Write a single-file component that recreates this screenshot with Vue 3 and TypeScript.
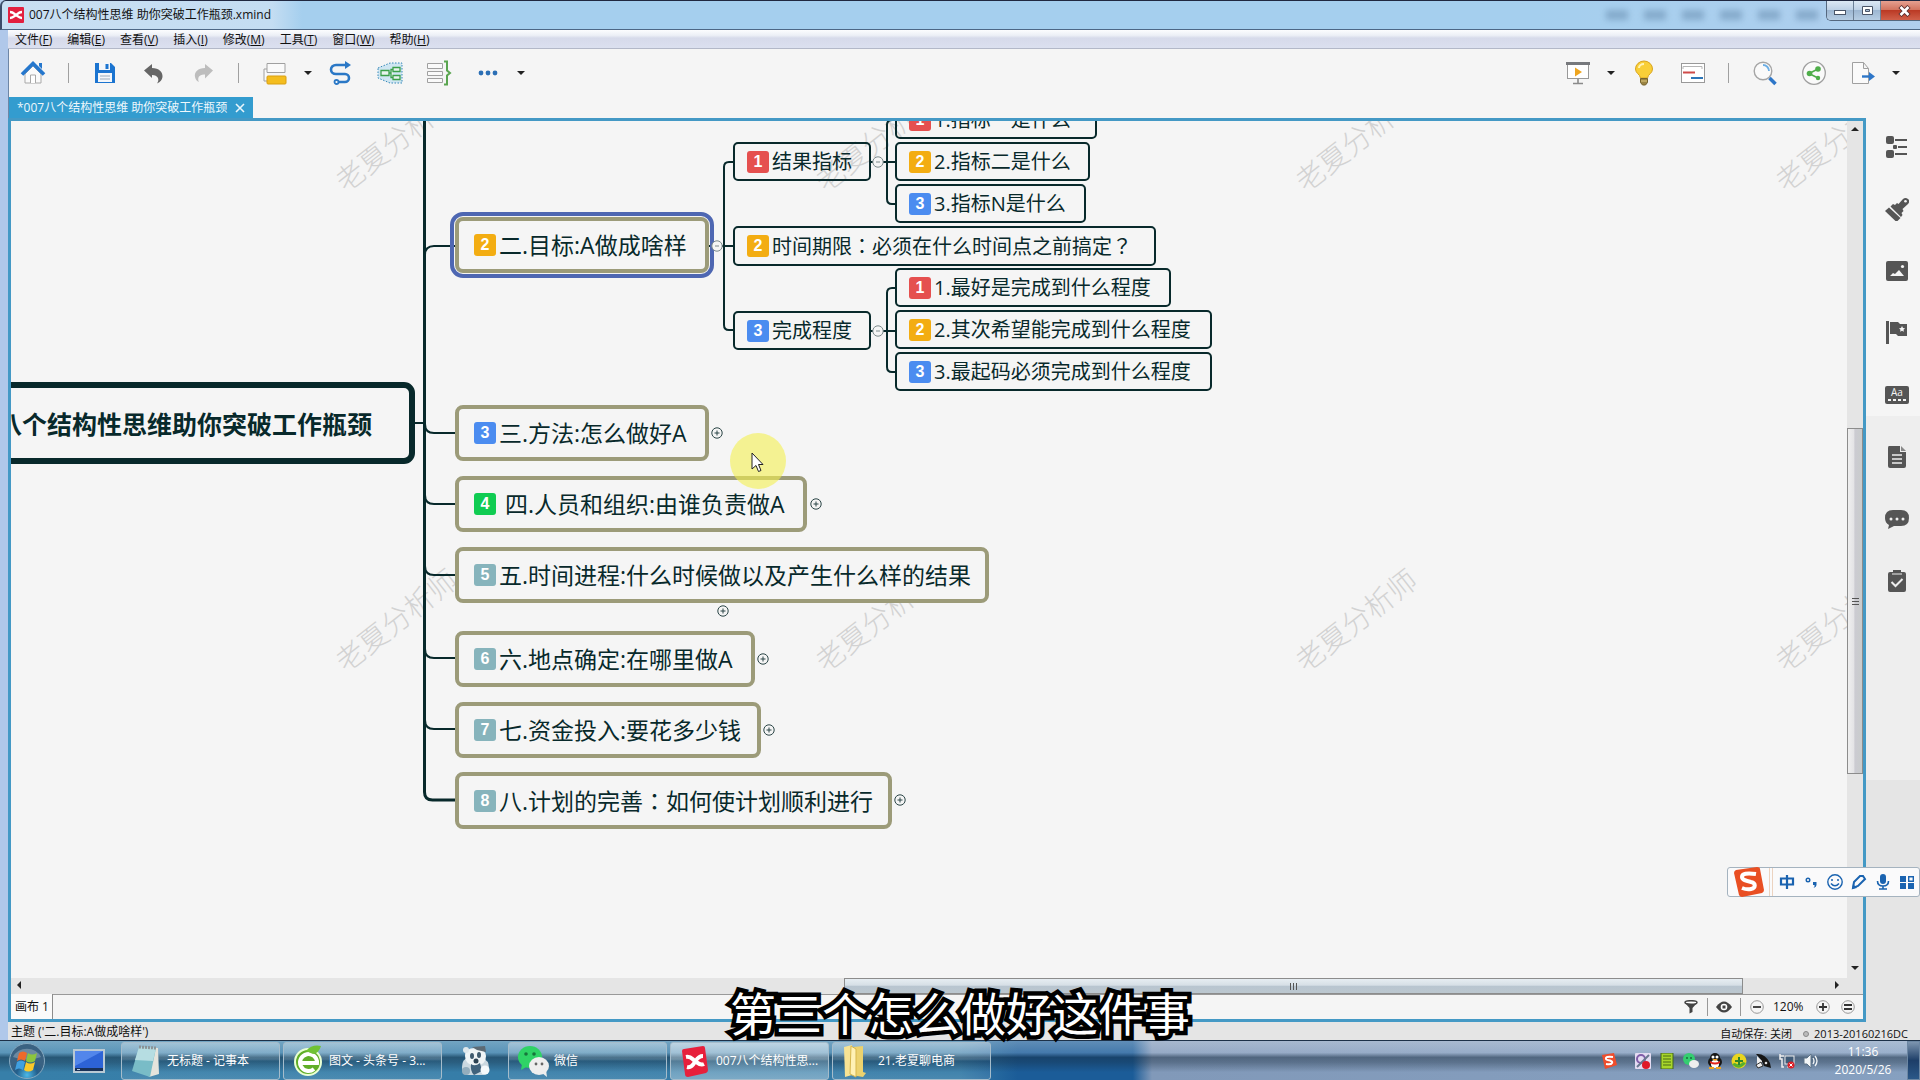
<script setup lang="ts">
interface Topic {
  badge: number
  text: string
  x: number
  y: number
  w: number
  selected?: boolean
}
interface Toggle {
  x: number
  y: number
  open?: boolean
}

const menus = [
  ['文件', 'F'], ['编辑', 'E'], ['查看', 'V'], ['插入', 'I'],
  ['修改', 'M'], ['工具', 'T'], ['窗口', 'W'], ['帮助', 'H'],
]

const mainTopics: Topic[] = [
  { badge: 2, text: '二.目标:A做成啥样', x: 444, y: 96, w: 254, selected: true },
  { badge: 3, text: '三.方法:怎么做好A', x: 444, y: 284, w: 254 },
  { badge: 4, text: ' 四.人员和组织:由谁负责做A', x: 444, y: 355, w: 352 },
  { badge: 5, text: '五.时间进程:什么时候做以及产生什么样的结果', x: 444, y: 426, w: 534 },
  { badge: 6, text: '六.地点确定:在哪里做A', x: 444, y: 510, w: 300 },
  { badge: 7, text: '七.资金投入:要花多少钱', x: 444, y: 581, w: 306 },
  { badge: 8, text: '八.计划的完善：如何使计划顺利进行', x: 444, y: 651, w: 437 },
]

const subTopics: Topic[] = [
  { badge: 1, text: '结果指标', x: 722, y: 21, w: 138 },
  { badge: 2, text: '时间期限：必须在什么时间点之前搞定？', x: 722, y: 105, w: 423 },
  { badge: 3, text: '完成程度', x: 722, y: 190, w: 138 },
  { badge: 1, text: '1.指标一是什么', x: 884, y: -21, w: 202 },
  { badge: 2, text: '2.指标二是什么', x: 884, y: 21, w: 195 },
  { badge: 3, text: '3.指标N是什么', x: 884, y: 63, w: 191 },
  { badge: 1, text: '1.最好是完成到什么程度', x: 884, y: 147, w: 276 },
  { badge: 2, text: '2.其次希望能完成到什么程度', x: 884, y: 189, w: 317 },
  { badge: 3, text: '3.最起码必须完成到什么程度', x: 884, y: 231, w: 317 },
]

const toggles: Toggle[] = [
  { x: 706, y: 125, open: true },
  { x: 867, y: 41, open: true },
  { x: 867, y: 210, open: true },
  { x: 706, y: 312 },
  { x: 805, y: 383 },
  { x: 712, y: 490 },
  { x: 752, y: 538 },
  { x: 758, y: 609 },
  { x: 889, y: 679 },
]

const watermarks = [0, 1].flatMap((row) =>
  [0, 1, 2, 3].map((col) => ({ x: 385 + col * 480, y: 19 + row * 480 })),
)

// Full-width punctuation is set apart so that it can sit centred in its cell.
const pieces = (text: string) => text.split(/([：？])/).filter((s) => s !== '')
const isMark = (s: string) => s === '：' || s === '？'

const place = (p: { x: number; y: number }) => ({ left: `${p.x}px`, top: `${p.y}px` })
const box = (t: Topic) => ({ ...place(t), width: `${t.w}px` })
</script>

<template>
  <div class="desktop">
    <header class="titlebar">
      <svg class="app-icon" viewBox="0 0 16 16"><rect width="16" height="16" rx="1" fill="#e2203f" /><path d="M2 5c3 0 4 1.500 6 3s3 3 6 3M2 11c3 0 4-1.500 6-3s3-3 6-3" fill="none" stroke="#fff" stroke-width="2.400" /></svg>
      <span class="title-text">007八个结构性思维 助你突破工作瓶颈.xmind</span>
      <div class="ghosts" aria-hidden="true"><i></i><i></i><i></i><i></i><i></i><i></i></div>
      <div class="win-buttons">
        <button aria-label="最小化"><svg width="14" height="10" viewBox="0 0 14 10"><rect x="1.500" y="4.500" width="11" height="4" fill="#fff" stroke="#4a5568" /></svg></button>
        <button aria-label="还原"><svg width="13" height="11" viewBox="0 0 13 11"><path d="M1.500 1.500h10v8h-10z" fill="#fff" stroke="#4a5568" /><path d="M4.500 4.500h4v2h-4z" fill="#a9bfd6" stroke="#4a5568" /></svg></button>
        <button class="close" aria-label="关闭"><svg width="13" height="12" viewBox="0 0 13 12"><path d="M2 1.500l9 9M11 1.500l-9 9" stroke="#5b3030" stroke-width="4.500" /><path d="M2.500 2l8 8M10.500 2l-8 8" stroke="#fff" stroke-width="2.600" /></svg></button>
      </div>
    </header>

    <div class="window">
      <nav class="menubar">
        <button v-for="m in menus" :key="m[1]">{{ m[0] }}(<u>{{ m[1] }}</u>)</button>
      </nav>

      <div class="toolbar">
        <div class="tools">
          <button class="tool" aria-label="主页"><svg width="26" height="26" viewBox="0 0 26 26"><path d="M5 14v9h16v-9l-8-8z" fill="#fafafa" stroke="#a9a9a9" /><path d="M10.500 23v-8h5v8" fill="#fff" stroke="#a9a9a9" /><path d="M2 14.500L13 3.500l11 11" fill="none" stroke="#2577cd" stroke-width="3.600" /><path d="M19 3h3v6l-3-3z" fill="#2577cd" /></svg></button>
          <i class="sep"></i>
          <button class="tool" aria-label="保存"><svg width="22" height="24" viewBox="0 0 22 24"><path d="M1 2h16l4 4v16H1z" fill="#1b74d0" /><path d="M5 2h11v7H5z" fill="#f3f6fa" /><path d="M11.500 3h3v5h-3z" fill="#1b74d0" /><path d="M4 12h14v9H4z" fill="#f3f6fa" /><path d="M6 15h10M6 18h10" stroke="#9ab" /></svg></button>
          <button class="tool" aria-label="撤销"><svg width="22" height="24" viewBox="0 0 22 24"><path d="M1 9.500L9 3v4c7 0 11 4 10.500 9-.500 3-2 5-5.500 6.500 3-4 1-8.500-5-8.500v3z" fill="#666" /></svg></button>
          <button class="tool" aria-label="重做"><svg width="22" height="24" viewBox="0 0 22 24"><path d="M21 9.500L13 3v4C6 7 2 11 3 16c.500 2.500 2 4.500 4 5-2-4 0-8 6-7.500v4z" fill="#bdbdbd" /></svg></button>
          <i class="sep"></i>
          <button class="tool" aria-label="主题"><svg width="26" height="26" viewBox="0 0 26 26"><path d="M5 9H2v12h3M5 3.500h18v9H5z" fill="#fafafa" stroke="#a0a0a0" /><rect x="5" y="16" width="19" height="8" rx="1" fill="#f4bd1e" stroke="#d99f10" /></svg></button>
          <button class="caret" aria-label="更多主题"><i></i></button>
          <button class="tool" aria-label="联系"><svg width="24" height="26" viewBox="0 0 24 26"><path d="M18 5H7a5 4.500 0 000 9h9a4 4 0 010 8H9" fill="none" stroke="#2b78c6" stroke-width="2.600" /><path d="M16 1l6 4-6 4z" fill="#2b78c6" /><circle cx="7.500" cy="22" r="2" fill="#fff" stroke="#2b78c6" stroke-width="1.800" /></svg></button>
          <button class="tool" aria-label="外框"><svg width="26" height="26" viewBox="0 0 26 26"><path d="M1 8l12-5h12v20H13L1 18z" fill="#cfe6f2" stroke="#3688b8" stroke-dasharray="1.500 1.500" /><path d="M4 10.500h8v5H4zM16 7.500h7v4h-7zM16 15.500h7v4h-7zM12 13h2m2-3.500h-2v8h2" fill="#e8f4ee" stroke="#3ba04a" stroke-width="1.300" /></svg></button>
          <button class="tool" aria-label="概要"><svg width="26" height="26" viewBox="0 0 26 26"><path d="M1.500 3.500h15v5h-15zM1.500 11.500h15v4h-15zM1.500 18.500h15v4h-15z" fill="#fafafa" stroke="#a0a0a0" /><path d="M18 1.500h3v9l3 2.500-3 2.500v9h-3" fill="none" stroke="#5aa550" stroke-width="2" /></svg></button>
          <button class="tool" aria-label="更多"><svg width="20" height="6" viewBox="0 0 20 6"><g fill="#2b6fb5"><circle cx="3" cy="3" r="2.400" /><circle cx="10" cy="3" r="2.400" /><circle cx="17" cy="3" r="2.400" /></g></svg></button>
          <button class="caret" aria-label="更多选项"><i></i></button>
        </div>
        <div class="tools">
          <button class="tool" aria-label="演示"><svg width="26" height="26" viewBox="0 0 26 26"><path d="M13 19v4M8 23.500h10" stroke="#8a8a8a" stroke-width="1.600" /><rect x="2.500" y="4" width="21" height="14.500" fill="#fff" stroke="#999" /><rect x="1" y="2" width="24" height="3" fill="#77797d" /><path d="M10 7.500l7 4.500-7 4.500z" fill="#efa51f" /></svg></button>
          <button class="caret" aria-label="演示选项"><i></i></button>
          <button class="tool" aria-label="头脑风暴"><svg width="20" height="26" viewBox="0 0 20 26"><path d="M6.500 18C6 14 1.500 13.500 1.500 9a8.500 8 0 0117 0c0 4.500-4.500 5-5 9z" fill="#f9cf38" stroke="#d9a41f" /><path d="M5 8c0-2 2-4 5-4" fill="none" stroke="#fff3b5" stroke-width="2" /><path d="M6.500 18.500h7v4l-2 2.500h-3l-2-2.500z" fill="#9b8443" stroke="#75632d" /><path d="M7 21h6" stroke="#e2cb80" /></svg></button>
          <button class="tool" aria-label="甘特图"><svg width="26" height="22" viewBox="0 0 26 22"><rect x="1.500" y="1.500" width="23" height="19" fill="#fff" stroke="#999" /><path d="M3 7V4.500h19V7" fill="none" stroke="#b5b5b5" /><path d="M3 10.500h12" stroke="#cf4b49" stroke-width="2" /><path d="M11 16h12" stroke="#2d76b8" stroke-width="2" /></svg></button>
          <i class="sep"></i>
          <button class="tool" aria-label="搜索"><svg width="26" height="26" viewBox="0 0 26 26"><circle cx="11" cy="11" r="8.800" fill="#fafafa" stroke="#a5a5a5" stroke-width="1.400" /><path d="M11 5a6 6 0 016 6" fill="none" stroke="#6baee5" stroke-width="1.800" /><path d="M17.500 18l6 6" stroke="#2d76c8" stroke-width="3.600" /></svg></button>
          <button class="tool" aria-label="分享"><svg width="26" height="26" viewBox="0 0 26 26"><circle cx="13" cy="13" r="11.300" fill="#fafafa" stroke="#a0a0a0" stroke-width="1.300" /><path d="M17 9l-9 4.500 9 4.500" fill="none" stroke="#4fae4a" stroke-width="1.700" /><g fill="#4fae4a"><circle cx="17" cy="9" r="2.800" /><circle cx="8.500" cy="13.500" r="2.800" /><circle cx="17" cy="18" r="2.200" /></g></svg></button>
          <button class="tool" aria-label="导出"><svg width="26" height="26" viewBox="0 0 26 26"><path d="M2.500 2.500h11l5 6v15h-16zM13.500 2.500v6h5" fill="#fafafa" stroke="#a0a0a0" /><path d="M12 16.500h9" stroke="#2d76c8" stroke-width="2.400" /><path d="M19 12l6 4.500-6 4.500z" fill="#2d76c8" /></svg></button>
          <button class="caret" aria-label="导出选项"><i></i></button>
        </div>
      </div>

      <div class="work">
        <section class="editor">
          <div class="tabs">
            <div class="tab">
              <span>*007八个结构性思维 助你突破工作瓶颈</span>
              <button aria-label="关闭标签"><svg width="10" height="10" viewBox="0 0 10 10"><path d="M1 1l8 8M9 1l-8 8" stroke="#e8f5fb" stroke-width="1.600" /></svg></button>
            </div>
          </div>
          <div class="frame">
            <div class="view">
              <main class="canvas">
                <span v-for="(w, i) in watermarks" :key="'w' + i" class="watermark" :style="place(w)" aria-hidden="true">老夏分析师</span>

                <svg class="links" aria-hidden="true">
                  <g fill="none" stroke="#08292b" stroke-width="2">
                    <path d="M404 302h10" />
                    <path d="M413.500 0V671q0 8 8 8h23" stroke-width="3" />
                    <path d="M414 134q0-9 9-9h22M414 303q0 9 9 9h22M414 374q0 9 9 9h22M414 445q0 9 9 9h22M414 528q0 9 9 9h22M414 599q0 9 9 9h22" />
                    <path d="M698 125h25M723 41h-5q-5 0-5 5V204q0 5 5 5h5" />
                    <path d="M860 41h25M885-1h-4q-5 0-5 5V78q0 5 5 5h4" />
                    <path d="M860 210h25M885 167h-4q-5 0-5 5V246q0 5 5 5h4" />
                  </g>
                </svg>

                <div class="root-topic">八个结构性思维助你突破工作瓶颈</div>

                <div v-for="t in mainTopics" :key="t.text" class="topic main" :class="{ selected: t.selected }" :style="box(t)">
                  <b class="badge" :class="'p' + t.badge">{{ t.badge }}</b><span><span v-for="(s, i) in pieces(t.text)" :key="i" :class="{ mark: isMark(s) }">{{ s }}</span></span>
                </div>
                <div v-for="t in subTopics" :key="t.text" class="topic sub" :style="box(t)">
                  <b class="badge" :class="'p' + t.badge">{{ t.badge }}</b><span><span v-for="(s, i) in pieces(t.text)" :key="i" :class="{ mark: isMark(s) }">{{ s }}</span></span>
                </div>

                <button v-for="(g, i) in toggles" :key="'g' + i" class="toggle" :class="{ open: g.open }" :style="place(g)" :aria-label="g.open ? '收起' : '展开'">
                  <svg viewBox="0 0 12 12"><circle cx="6" cy="6" r="5.200" /><path :d="g.open ? 'M4 6h4' : 'M3.500 6h5M6 3.500v5'" /></svg>
                </button>

                <div class="pointer">
                  <svg width="14" height="21" viewBox="0 0 14 21"><path d="M1 1v16l4-3.500 2.500 6 2.500-1-2.500-6H12z" fill="#fff" stroke="#222" /></svg>
                </div>
              </main>
              <div class="vscroll">
                <div class="v-before"><i class="up"></i></div>
                <div class="v-thumb"><i></i><i></i><i></i></div>
                <div class="v-after"><i class="down"></i></div>
              </div>
            </div>
            <div class="hscroll">
              <div class="h-before"><i class="left"></i></div>
              <div class="h-thumb"><i></i><i></i><i></i></div>
              <div class="h-after"><i class="right"></i></div>
            </div>
            <div class="sheets">
              <button class="sheet">画布 1</button>
              <div class="sheet-tools">
                <button class="wide" aria-label="筛选"><svg width="14" height="14" viewBox="0 0 14 14"><ellipse cx="7" cy="2.500" rx="6" ry="1.800" fill="#fff" stroke="#444" stroke-width="1.500" /><path d="M1 3l4.500 5v5.500l3-1.500V8L13 3q-6 3-12 0z" fill="#444" /></svg></button>
                <i class="rule"></i>
                <button class="wide" aria-label="显示"><svg width="18" height="12" viewBox="0 0 18 12"><path d="M1 6q8-11 16 0-8 11-16 0z" fill="#444" /><circle cx="9" cy="6" r="3.300" fill="#fff" /><rect x="7.500" y="4.500" width="3" height="3" fill="#444" /></svg></button>
                <i class="rule"></i>
                <button class="wide" aria-label="缩小"><svg width="14" height="14" viewBox="0 0 14 14"><circle cx="7" cy="7" r="6.300" fill="none" stroke="#999" /><path d="M3 7h8" stroke="#333" stroke-width="1.800" /></svg></button>
                <span class="zoom">120%</span>
                <button class="narrow" aria-label="放大"><svg width="14" height="14" viewBox="0 0 14 14"><circle cx="7" cy="7" r="6.300" fill="none" stroke="#999" /><path d="M3 7h8M7 3v8" stroke="#333" stroke-width="1.800" /></svg></button>
                <button class="narrow" aria-label="实际大小"><svg width="14" height="14" viewBox="0 0 14 14"><circle cx="7" cy="7" r="6.300" fill="none" stroke="#999" /><path d="M3 5h8M3 9h8" stroke="#333" stroke-width="1.800" /></svg></button>
              </div>
            </div>
          </div>
        </section>

        <aside class="sidebar">
          <div class="group first">
            <button aria-label="大纲"><svg viewBox="0 0 24 24"><path d="M10 5h12M13 12h9M10 19h12" stroke="#555" stroke-width="2" /><g fill="#555"><rect x="1" y="1" width="8" height="8" rx="2" /><rect x="8" y="10" width="4" height="4" rx="1" /><rect x="1" y="15" width="8" height="8" rx="2" /></g></svg></button>
            <button aria-label="格式"><svg viewBox="0 0 24 24"><g fill="#555"><path d="M0 14l4-3.500L15.500 21 11.500 25z" /><path d="M5.500 9.500L8 7l2 1 2-2 1.500 1L18 2q2.500-2 5 0t0 5l-5.500 5 1 2-2 2 1 2-1.500 2z" /></g><circle cx="20.500" cy="4.300" r="1.300" fill="#f5f5f5" /></svg></button>
            <button aria-label="图片"><svg viewBox="0 0 24 24"><rect x="1" y="2" width="22" height="20" rx="2" fill="#555" /><path d="M5 17l3-3 2 1 4-4 5 6z" fill="#f5f5f5" /><circle cx="17.500" cy="7.500" r="1.600" fill="#f5f5f5" /></svg></button>
            <button aria-label="图标"><svg viewBox="0 0 24 24"><path d="M1 0h3v23H1zM5 1h8l2 2h7v12H13l-2-2H5z" fill="#555" /><path d="M17 5l1 2 2 .300-1.500 1.500.400 2-1.900-1-1.900 1 .400-2L14 7.300l2-.300z" fill="#f5f5f5" /></svg></button>
            <button aria-label="标签"><svg viewBox="0 0 24 24"><rect x="0" y="3" width="24" height="18" rx="2" fill="#555" /><text x="12" y="13" font-size="10" text-anchor="middle" fill="#f5f5f5">Aa</text><path d="M3 17h18" stroke="#f5f5f5" stroke-width="2" stroke-dasharray="3 2" /></svg></button>
          </div>
          <div class="group second">
            <button aria-label="备注"><svg viewBox="0 0 24 24"><path d="M4 1h11v6h6v14q0 2-2 2H5q-2 0-2-2V3q0-2 1-2z" fill="#555" /><path d="M16 1l5 5h-5z" fill="#888" /><path d="M7 10h10M7 14h10M7 18h10" stroke="#eee" stroke-width="1.300" /></svg></button>
            <button aria-label="批注"><svg viewBox="0 0 24 24"><path d="M8 3h8q8 0 8 8t-8 8H9l-6 3 1-4q-4-2-4-7 0-8 8-8z" fill="#555" /><g fill="#eee"><circle cx="6" cy="12" r="1.500" /><circle cx="12" cy="12" r="1.500" /><circle cx="18" cy="12" r="1.500" /></g></svg></button>
            <button aria-label="任务"><svg viewBox="0 0 24 24"><path d="M5 3h3V1h8v2h3q2 0 2 2v16q0 2-2 2H5q-2 0-2-2V5q0-2 2-2z" fill="#555" /><path d="M7 5h10" stroke="#eee" /><path d="M6.500 13l4 4 7-7" fill="none" stroke="#eee" stroke-width="2" /></svg></button>
          </div>
        </aside>
      </div>

      <footer class="status">
        <span>主题 ('二.目标:A做成啥样')</span>
        <span class="status-right">自动保存: 关闭<i></i>2013-20160216DC</span>
      </footer>
    </div>

    <div class="taskbar">
      <button class="orb" aria-label="开始"><svg width="38" height="38" viewBox="0 0 38 38"><defs><radialGradient id="orb" cy="0.900"><stop offset="0" stop-color="#4cb9e8" /><stop offset=".6" stop-color="#235f8c" /><stop offset="1" stop-color="#3a6282" /></radialGradient></defs><circle cx="19" cy="19" r="17.500" fill="url(#orb)" stroke="#86a9c0" /><path d="M5 15a15 13 0 0128 0q-14 5-28 0z" fill="#fff" opacity=".25" /><path d="M11 11q4-3 8 0l-2 8q-4-3-8 0z" fill="#ee6a2b" /><path d="M20 11q4 3 9 0l-2 8q-5 3-9 0z" fill="#8cc53e" /><path d="M9 20q4-3 8 0l-2 8q-4-3-8 0z" fill="#40a0e0" /><path d="M18 20q4 3 9 0l-2 8q-5 3-9 0z" fill="#fbc929" /></svg></button>
      <button class="quick" aria-label="显示桌面"><svg width="32" height="24" viewBox="0 0 32 24"><rect x="1" y="1" width="30" height="22" fill="#2d63d6" stroke="#b9c9d4" stroke-width="2" /><path d="M2 2h28L2 17z" fill="#78a9ff" opacity=".5" /><path d="M2 19h28v3H2z" fill="#193157" /><path d="M4 20.500h3" stroke="#bcd" /></svg></button>
      <button class="task">
        <svg width="32" height="34" viewBox="0 0 32 34"><path d="M10 3l18 1 1 26-10 3z" fill="#e5e4dc" /><path d="M9 3l17 1-6 29L2 27z" fill="#79bcc7" /><path d="M9 3l17 1-3 13L5 16z" fill="#b6dde2" /><path d="M9 3l17 1" stroke="#8b9296" stroke-width="3" stroke-dasharray="2 1" /></svg><span>无标题 - 记事本</span></button>
      <button class="task">
        <svg width="32" height="34" viewBox="0 0 32 34"><circle cx="16" cy="18" r="13" fill="#61ae28" stroke="#e9ffd4" stroke-width="2" /><path d="M8 19h17a8.500 8.500 0 10-3 6" fill="none" stroke="#fff" stroke-width="4" /><path d="M14 7Q20 0 29 2q-2 7-8 8z" fill="#70c234" /></svg><span>图文 - 头条号 - 3...</span></button>
      <button class="paw" aria-label="百度"><svg width="32" height="32" viewBox="0 0 32 32"><path d="M3 22q0-8 6-9h14q7 2 7 10 0 7-6 7H8q-5 0-5-8z" fill="#cbd8e0" /><path d="M6 11q0-8 10-8t11 8q0 9-10 10Q6 20 6 11z" fill="#eff4f6" /><path d="M13 2l13-1 1 6-9-2z" fill="#5c6a74" /><circle cx="7" cy="5" r="3" fill="#dfe8ec" /><ellipse cx="13" cy="11" rx="2" ry="3" fill="#3f5a6e" /><ellipse cx="20" cy="10" rx="2" ry="3" fill="#3f5a6e" /><path d="M12 19q4 3 9-1l2 8-8 4q-4-4-3-11z" fill="#40627c" /><circle cx="17" cy="16" r="2.500" fill="#2b4152" /><circle cx="7" cy="26" r="4" fill="#93adbd" /><circle cx="26" cy="25" r="4.500" fill="#f6fafc" /></svg></button>
      <button class="task">
        <svg width="32" height="34" viewBox="0 0 32 34"><ellipse cx="13" cy="13" rx="12" ry="11" fill="#2fd366" /><path d="M5 20l-1 6 7-4z" fill="#2fd366" /><circle cx="9" cy="10" r="1.800" fill="#17753b" /><circle cx="17" cy="10" r="1.800" fill="#17753b" /><ellipse cx="22" cy="22" rx="10" ry="9" fill="#eee" /><path d="M25 29l5 4-1-7z" fill="#eee" /><circle cx="19" cy="20" r="1.400" fill="#666" /><circle cx="25" cy="20" r="1.400" fill="#666" /></svg><span>微信</span></button>
      <button class="task active">
        <svg width="32" height="34" viewBox="0 0 32 34"><path d="M3 7Q3 5 5 5l19-3q2 0 2 2l3 22q0 2-2 3L9 33q-3 0-3-3z" fill="#e7203c" /><path d="M7 13c5-1 6 2 9 4s5 5 9 3M8 23c4 1 6-2 8-5s3-6 8-6" fill="none" stroke="#fff" stroke-width="4" /></svg><span>007八个结构性思...</span></button>
      <button class="task">
        <svg width="32" height="34" viewBox="0 0 32 34"><path d="M3 3l8-2v30l-7 2z" fill="#f7e394" /><path d="M12 3l10-1v26l3 1-3 4-12-2z" fill="#ecd26e" /><path d="M10 2l5 3v28l-6-3z" fill="#fff1b5" stroke="#d5b64d" /></svg><span>21.老夏聊电商</span></button>

      <div class="tray">
        <svg class="sogou" viewBox="0 0 16 16"><path d="M1 2l12-2 3 12-12 4z" fill="#ef4d2c" /><path d="M12 4q-8-1-7 2 0 1 4 1.500 3 1 2 2.500-1 2-6 1" fill="none" stroke="#fff" stroke-width="2" /></svg>
        <svg viewBox="0 0 16 16"><rect width="16" height="16" rx="1" fill="#e4dcf2" /><circle cx="6" cy="6" r="4" fill="none" stroke="#805da8" stroke-width="2" /><path d="M2 14L14 2" stroke="#68778f" stroke-width="2" /><circle cx="11" cy="12" r="4" fill="#df1928" /></svg>
        <svg viewBox="0 0 16 16"><rect x="2" width="12" height="16" fill="#a8d62b" stroke="#41641c" /><path d="M4 3h8M4 6h8M4 9h8M4 12h8" stroke="#486b17" /></svg>
        <svg viewBox="0 0 16 16"><circle cx="6" cy="6" r="6" fill="#34cd70" /><circle cx="4" cy="5" r="1" fill="#176d3c" /><circle cx="8" cy="5" r="1" fill="#176d3c" /><ellipse cx="11" cy="11" rx="5" ry="4" fill="#eee" /></svg>
        <svg viewBox="0 0 16 16"><ellipse cx="8" cy="9" rx="7" ry="6" fill="#171717" /><circle cx="8" cy="5" r="5" fill="#171717" /><ellipse cx="8" cy="11" rx="4" ry="4" fill="#fff" /><circle cx="6" cy="4" r="1.500" fill="#fff" /><circle cx="10" cy="4" r="1.500" fill="#fff" /><path d="M3 8q5 3 10 0v2q-5 3-10 0z" fill="#e3231b" /><path d="M5 6h6l-3 2zM2 14h5v2H2zM9 14h5v2H9z" fill="#f3a31c" /></svg>
        <svg viewBox="0 0 16 16"><circle cx="8" cy="8" r="7.500" fill="#e8d51e" /><path d="M1 11q7 8 14-1l-3-1q-4 4-8 1z" fill="#57af2e" /><path d="M8 4v8M4 8h8" stroke="#2e852a" stroke-width="2" /></svg>
        <svg viewBox="0 0 16 16"><path d="M1 1q9-1 14 9l1 5-7-2q-2-6-8-12z" fill="#151515" /><path d="M2 3l5 5-1 5-4-1z" fill="#eee" /><circle cx="11" cy="10" r="1.300" fill="#ddd" /><path d="M1 12l5-3 2 4-5 2z" fill="#eee" stroke="#333" /></svg>
        <svg viewBox="0 0 16 16"><path d="M1 1v5h2v8h2M1 3h4" fill="none" stroke="#eee" stroke-width="1.500" /><rect x="6" y="3" width="9" height="8" fill="#405b77" stroke="#eee" /><path d="M8 14h6" stroke="#eee" /><circle cx="12" cy="12" r="3.500" fill="#dc1f27" /><path d="M10.500 10.500l3 3M13.500 10.500l-3 3" stroke="#fff" /></svg>
        <svg viewBox="0 0 16 16"><path d="M1 5h3l4-4v14l-4-4H1z" fill="#f3f6f8" stroke="#5e7488" /><path d="M10 5q2 3 0 6M12 3q4 5 0 10" fill="none" stroke="#f3f6f8" stroke-width="1.300" /></svg>
      </div>
      <div class="clock"><span>11:36</span><span>2020/5/26</span></div>
      <button class="peek" aria-label="显示桌面"></button>
    </div>

    <div class="ime">
      <svg class="ime-logo" width="32" height="30" viewBox="0 0 32 30"><path d="M1 6q0-2 2-3l21-3q3 0 3 2l4 21q0 2-2 3L9 30q-2 0-3-2z" fill="#e94f23" /><path d="M23 7Q9 5 9 10c0 3 5 4 9 5 5 1 5 6 0 7q-4 1-9-1" fill="none" stroke="#fff" stroke-width="4" /></svg>
      <i class="ime-rule"></i>
      <button aria-label="中文"><svg viewBox="0 0 16 16"><path d="M2 4.500h12v6H2zM8 1v14" fill="none" stroke="#1a63b0" stroke-width="2.200" /></svg></button>
      <button aria-label="标点"><svg viewBox="0 0 16 16"><circle cx="5" cy="6" r="1.800" fill="none" stroke="#1a63b0" stroke-width="1.400" /><path d="M10 8h3.500v3q0 2-3 3 1.500-1.500 1-3H10z" fill="#1a63b0" /></svg></button>
      <button aria-label="表情"><svg viewBox="0 0 16 16"><circle cx="8" cy="8" r="7.200" fill="none" stroke="#1a63b0" stroke-width="1.400" /><path d="M5 5v2M11 5v2M4 9.500q4 4.500 8 0" fill="none" stroke="#1a63b0" stroke-width="1.500" /></svg></button>
      <button aria-label="手写"><svg viewBox="0 0 16 16"><path d="M2 14l1-6 6-6h3l2 3-7 7z" fill="none" stroke="#1a63b0" stroke-width="2" /><path d="M1 15l1-5 4 4z" fill="#1a63b0" /></svg></button>
      <button aria-label="语音"><svg viewBox="0 0 16 16"><rect x="5" y="0" width="6" height="10" rx="3" fill="#1a63b0" /><path d="M2.500 7q0 5 5.500 5t5.500-5M8 12v3M4 15h8" fill="none" stroke="#1a63b0" stroke-width="1.600" /></svg></button>
      <button aria-label="工具箱"><svg viewBox="0 0 16 16"><path d="M1 2h6v6H1zM1 9h6v6H1zM9 9h6v6H9z" fill="#1a63b0" /><path d="M9.700 2.700h4.600v4.600H9.700z" fill="none" stroke="#1a63b0" stroke-width="1.400" /></svg></button>
    </div>

    <p class="subtitle">第三个怎么做好这件事</p>
  </div>
</template>

<style>
body {
  margin: 0;
}
</style>

<style scoped>
* {
  box-sizing: border-box;
}
.desktop {
  position: relative;
  display: flex;
  flex-direction: column;
  min-height: 100vh;
  overflow: hidden;
  font-family: "Open Sans", "Noto Sans CJK SC", sans-serif;
  font-size: 12px;
  line-height: 16px;
  color: #111;
  background: #b4cdec;
}
button {
  display: flex;
  align-items: center;
  justify-content: center;
  padding: 0;
  border: 0;
  background: none;
  color: inherit;
  font: inherit;
  white-space: nowrap;
}
svg {
  display: block;
  flex: none;
}

.titlebar {
  display: flex;
  align-items: center;
  height: 30px;
  padding-left: 8px;
  border-top: 1px solid #202840;
  border-bottom: 1px solid #4d6785;
  border-left: 2px solid #3c4c68;
  border-radius: 6px 0 0 0;
  background: linear-gradient(90deg, #c9dff2 0, #c4ddf2 270px, #a5cfee 300px, #a5cfee 80%, #b0cfee 100%);
}
.app-icon {
  width: 16px;
  height: 16px;
  margin: 0 5px 0 -2px;
}
.ghosts {
  display: flex;
  gap: 16px;
  margin: 0 8px 0 auto;
}
.ghosts i {
  width: 22px;
  height: 10px;
  background: #6d93b5;
  opacity: 0.6;
  filter: blur(3px);
}
.win-buttons {
  display: flex;
  align-self: flex-start;
  border: 1px solid #55687f;
  border-top: 0;
  border-right: 0;
  border-radius: 0 0 0 5px;
  overflow: hidden;
}
.win-buttons button {
  width: 27px;
  height: 19px;
  border-right: 1px solid #6c8096;
  background: linear-gradient(#dce8f4 0, #bfd2e6 45%, #9db7d2 50%, #b6cde3 100%);
}
.win-buttons .close {
  width: 39px;
  padding-left: 8px;
  border: 0;
  background: linear-gradient(#e5a090 0, #d37560 45%, #bb3a25 50%, #d0604a 100%);
}

.window {
  flex: 1;
  display: flex;
  flex-direction: column;
  border-left: 8px solid #b0c8ea;
  background: #f5f5f5;
  box-shadow: inset 1px 0 0 #6e86a6;
}
.menubar {
  display: flex;
  gap: 15px;
  height: 19px;
  padding: 2px 0 0 7px;
  border-bottom: 1px solid #b3b8c8;
  background: linear-gradient(#fcfdfe 0, #eceff6 30%, #d6daea 45%, #dbe0ef 100%);
}
.toolbar {
  display: flex;
  justify-content: space-between;
  height: 48px;
  padding-right: 16px;
}
.tools {
  display: flex;
  align-items: center;
}
.tool {
  width: 49px;
  height: 40px;
}
.sep {
  display: flex;
  justify-content: center;
  width: 23px;
}
.sep::before {
  content: "";
  width: 1px;
  height: 20px;
  background: #a0a0a0;
}
.caret {
  width: 17px;
  height: 40px;
}
.caret i {
  border: 4px solid transparent;
  border-top-color: #222;
  border-bottom: 0;
}

.work {
  flex: 1;
  display: flex;
}
.editor {
  flex: 1;
  display: flex;
  flex-direction: column;
  min-width: 0;
}
.tabs {
  display: flex;
  height: 21px;
  padding-left: 1px;
}
.tab {
  display: flex;
  align-items: center;
  gap: 8px;
  padding: 0 8px;
  background: #339ccf;
  color: #eef8fd;
  white-space: nowrap;
}
.frame {
  flex: 1;
  display: flex;
  flex-direction: column;
  border: 3px solid #4499c5;
}
.view {
  flex: 1;
  display: flex;
}
.canvas {
  position: relative;
  flex: 1;
  overflow: hidden;
  color: #08292b;
}
.links {
  position: absolute;
  inset: 0;
  width: 100%;
  height: 100%;
}
.watermark {
  position: absolute;
  font-size: 29px;
  font-weight: 300;
  line-height: 32px;
  color: #d2d2d2;
  white-space: nowrap;
  transform: translate(-50%, -50%) rotate(-38deg);
}
.root-topic {
  position: absolute;
  left: -44px;
  top: 261px;
  width: 448px;
  padding: 18px 37px 16px 0;
  border: 6px solid #08292b;
  border-radius: 11px;
  font-size: 25px;
  font-weight: 700;
  line-height: 36px;
  text-align: right;
  white-space: nowrap;
}
.topic {
  position: absolute;
  display: flex;
  align-items: center;
  gap: 3px;
  white-space: pre;
}
.mark {
  font-family: "Noto Sans CJK TC", sans-serif;
}
.main {
  padding: 10px 15px;
  border: 4px solid #9c9b79;
  border-radius: 8px;
  background: #f5f5f5;
  font-size: 23px;
  line-height: 28px;
}
.selected {
  outline: 4px solid #4e67b2;
  outline-offset: 1px;
}
.sub {
  padding: 4px 12px;
  border: 2px solid #08292b;
  border-radius: 5px;
  font-size: 20px;
  line-height: 27px;
}
.badge {
  width: 22px;
  height: 22px;
  flex: none;
  border-radius: 3px;
  font-family: "Liberation Sans", sans-serif;
  font-size: 16px;
  line-height: 22px;
  text-align: center;
  color: #fff;
  background: #87b4bc;
}
.p1 {
  background: #e5504f;
}
.p2 {
  background: #f3ad12;
}
.p3 {
  background: #4b8cf0;
}
.p4 {
  background: #10cc52;
}
.toggle {
  position: absolute;
  width: 12px;
  height: 12px;
  transform: translate(-50%, -50%);
}
.toggle svg {
  width: 12px;
  height: 12px;
  overflow: visible;
  fill: #f5f5f5;
  stroke: #2b4546;
}
.toggle.open svg {
  stroke: #7c8a8b;
}
.pointer {
  position: absolute;
  left: 719px;
  top: 312px;
  width: 56px;
  height: 56px;
  padding: 19px 0 0 21px;
  border-radius: 50%;
  background: rgba(244, 240, 80, 0.6);
}

.vscroll {
  display: flex;
  flex-direction: column;
  width: 16px;
  background: #e5e5e5;
}
.v-before {
  flex: 308 1 0;
}
.v-thumb {
  flex: 345 1 0;
  display: flex;
  flex-direction: column;
  align-items: center;
  justify-content: center;
  gap: 2px;
  border: 1px solid #8c8c8c;
  background: linear-gradient(90deg, #efefef 0, #e4e4e6 40%, #cbcbd1 50%, #c9cccc 100%);
}
.v-thumb i {
  width: 7px;
  height: 1px;
  background: #555;
}
.v-after {
  flex: 204 1 0;
  display: flex;
  align-items: flex-end;
}
.up,
.down,
.left,
.right {
  display: block;
  width: 0;
  height: 0;
  border: 4px solid transparent;
}
.up {
  margin: 6px 4px;
  border-top: 0;
  border-bottom-color: #222;
}
.down {
  margin: 8px 4px;
  border-bottom: 0;
  border-top-color: #222;
}
.left {
  margin: 3px 6px;
  border-left: 0;
  border-right-color: #222;
}
.right {
  margin: 3px 24px;
  border-right: 0;
  border-left-color: #222;
}
.hscroll {
  display: flex;
  height: 16px;
  background: #e5e5e5;
}
.h-before {
  flex: 834 1 0;
}
.h-thumb {
  flex: 898 1 0;
  display: flex;
  align-items: center;
  justify-content: center;
  gap: 2px;
  border: 1px solid #8c8c8c;
  background: linear-gradient(#e6edf2 0, #d6dfe6 45%, #b8c5d0 50%, #bcc7cf 100%);
}
.h-thumb i {
  width: 1px;
  height: 7px;
  background: #555;
}
.h-after {
  flex: 120 1 0;
  display: flex;
  justify-content: flex-end;
}
.sheets {
  display: flex;
  height: 25px;
}
.sheet {
  padding: 0 3px 0 4px;
  border-right: 1px solid #8c8c8c;
  background: #fafafa;
}
.sheet-tools {
  flex: 1;
  display: flex;
  align-items: center;
  justify-content: flex-end;
  padding-right: 3px;
  border-top: 1px solid #999;
}
.narrow {
  width: 25px;
  height: 24px;
}
.wide {
  width: 32px;
  height: 24px;
}
.rule {
  width: 1px;
  height: 18px;
  background: #999;
}
.zoom {
  width: 37px;
}

.sidebar {
  display: flex;
  flex-direction: column;
  width: 54px;
  background: #e5e5e5;
}
.group {
  display: flex;
  flex-direction: column;
  align-items: center;
  gap: 38px;
  padding-left: 8px;
}
.first {
  padding-top: 38px;
  padding-bottom: 9px;
  background: #f5f5f5;
}
.second {
  padding-top: 29px;
  padding-bottom: 187px;
  background: #eee;
}
.group svg {
  width: 24px;
  height: 24px;
}

.status {
  display: flex;
  justify-content: space-between;
  height: 18px;
  padding: 2px 12px 0 3px;
  background: #e5e5e5;
}
.status-right {
  display: flex;
  align-items: center;
  padding-top: 3px;
  font-size: 11px;
}
.status-right i {
  width: 6px;
  height: 6px;
  margin: 0 5px 0 11px;
  border: 1px solid #888;
  border-radius: 50%;
  background: #bbb;
}

.taskbar {
  position: relative;
  display: flex;
  align-items: center;
  gap: 3px;
  height: 40px;
  padding-left: 8px;
  border-top: 1px solid #1d3148;
  color: #fff;
  background:
    linear-gradient(rgba(255, 255, 255, 0.3) 0, rgba(235, 240, 250, 0.2) 30%, rgba(20, 38, 55, 0.45) 42%, rgba(20, 38, 55, 0.35) 55%, rgba(20, 38, 55, 0) 80%),
    linear-gradient(90deg, #377fa9 0, #357ba7 50%, #1b5c98 53%, #1b5c98 59%, #8199b9 60%, #86a0c0 100%);
}
.orb {
  width: 38px;
}
.quick {
  width: 69px;
  padding-left: 10px;
}
.task {
  justify-content: flex-start;
  gap: 5px;
  width: 159px;
  height: 38px;
  padding-left: 8px;
  border: 1px solid #a5bccb;
  border-radius: 3px;
  background: linear-gradient(rgba(255, 255, 255, 0.35) 0, rgba(255, 255, 255, 0.15) 45%, rgba(255, 255, 255, 0) 50%, rgba(255, 255, 255, 0.1) 100%);
}
.task.active {
  background: linear-gradient(rgba(255, 255, 255, 0.55) 0, rgba(255, 255, 255, 0.35) 45%, rgba(255, 255, 255, 0.2) 50%, rgba(255, 255, 255, 0.35) 100%);
}
.paw {
  width: 60px;
}
.tray {
  display: flex;
  align-items: center;
  gap: 8px;
  margin-left: auto;
}
.tray svg {
  width: 16px;
  height: 16px;
}
.tray .sogou {
  margin-right: 10px;
}
.clock {
  display: flex;
  flex-direction: column;
  align-items: center;
  gap: 2px;
  width: 82px;
}
.peek {
  width: 13px;
  height: 39px;
  border: 1px solid #6c87a3;
  background: linear-gradient(#7d95af, #1d3e68 50%, #2b5888);
}

.ime {
  position: absolute;
  right: 0;
  bottom: 183px;
  display: flex;
  align-items: center;
  height: 30px;
  padding-left: 5px;
  border: 1px solid #a5b3bf;
  border-radius: 3px;
  background: #fafafb;
}
.ime button {
  width: 24px;
  height: 28px;
}
.ime button svg {
  width: 16px;
  height: 16px;
}
.ime-rule {
  width: 4px;
  height: 28px;
  margin: 0 2px 0 4px;
  border: 1px solid #ecd3c0;
  border-width: 0 1px;
}

.subtitle {
  position: absolute;
  left: 0;
  right: 0;
  bottom: 38px;
  margin: 0;
  font-size: 46px;
  line-height: 58px;
  font-weight: 400;
  text-align: center;
  color: #fff;
  -webkit-text-stroke: 9px #000;
  paint-order: stroke fill;
  pointer-events: none;
}
</style>
